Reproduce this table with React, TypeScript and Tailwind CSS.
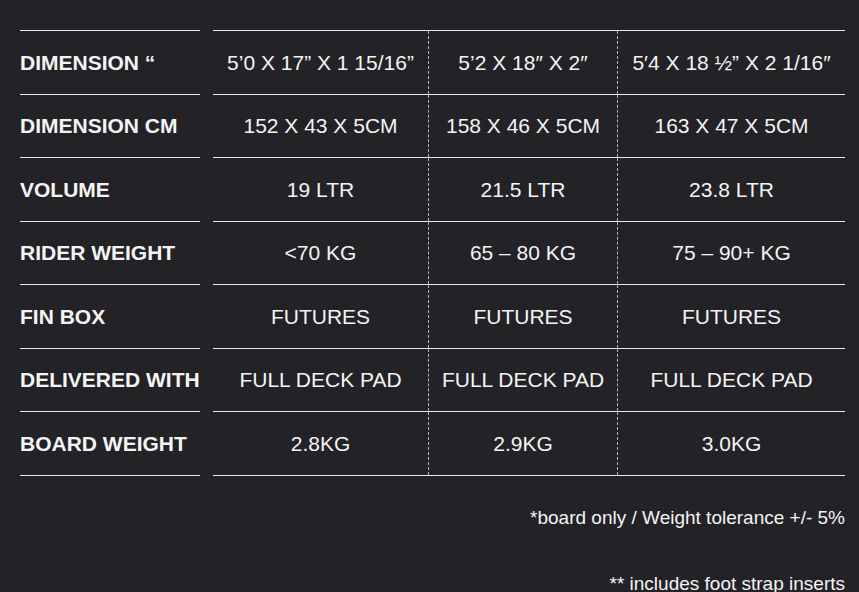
const rows: [string, string, string, string][] = [
  ["DIMENSION \u201C", "5\u20190 X 17\u201D X 1 15/16\u201D", "5\u20192 X 18\u2033 X 2\u2033", "5\u20324 X 18 \u00BD\u201D X 2 1/16\u2033"],
  ["DIMENSION CM", "152 X 43 X 5CM", "158 X 46 X 5CM", "163 X 47 X 5CM"],
  ["VOLUME", "19 LTR", "21.5 LTR", "23.8 LTR"],
  ["RIDER WEIGHT", "<70 KG", "65 \u2013 80 KG", "75 \u2013 90+ KG"],
  ["FIN BOX", "FUTURES", "FUTURES", "FUTURES"],
  ["DELIVERED WITH", "FULL DECK PAD", "FULL DECK PAD", "FULL DECK PAD"],
  ["BOARD WEIGHT", "2.8KG", "2.9KG", "3.0KG"],
]

export default function App() {
  return (
    <div className="min-h-screen bg-[#232226] pt-[30px] pl-5 pr-[14px] font-['Liberation_Sans',Arial,sans-serif] text-[#f4f4f4]">
      <div className="flex">
        {/* labels */}
        <div className="w-[180px] shrink-0 border-t border-[#e8e8e8]">
          {rows.map((r) => (
            <div key={r[0]} className="flex h-[63.5px] items-center border-b border-[#e8e8e8] text-[21px] font-bold whitespace-nowrap">
              {r[0]}
            </div>
          ))}
        </div>

        {/* values */}
        <div className="ml-[13px] flex-1 border-t border-[#e8e8e8]">
          {rows.map((r) => (
            <div key={r[0]} className="grid h-[63.5px] grid-cols-[215px_189px_1fr] border-b border-[#e8e8e8] text-[21px]">
              <div className="flex items-center justify-center whitespace-nowrap">{r[1]}</div>
              <div className="flex items-center justify-center whitespace-nowrap border-l border-dashed border-[#b5b5b5]">{r[2]}</div>
              <div className="flex items-center justify-center whitespace-nowrap border-l border-dashed border-[#b5b5b5]">{r[3]}</div>
            </div>
          ))}
        </div>
      </div>

      <p className="mt-[28px] text-right text-[19px] leading-[28px]">*board only / Weight tolerance +/- 5%</p>
      <p className="mt-[38px] text-right text-[19px] leading-[28px]">** includes foot strap inserts</p>
    </div>
  )
}
